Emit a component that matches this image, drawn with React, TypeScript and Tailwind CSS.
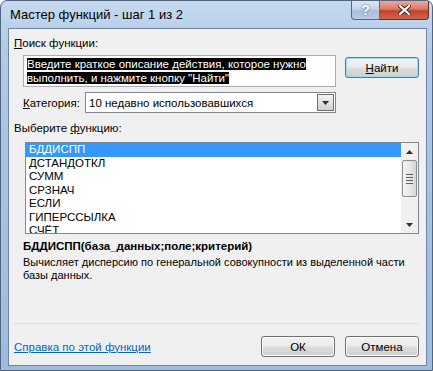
const items = ['БДДИСПП', 'ДСТАНДОТКЛ', 'СУММ', 'СРЗНАЧ', 'ЕСЛИ', 'ГИПЕРССЫЛКА', 'СЧЁТ']

function Button({ children, focused }: { children: React.ReactNode; focused?: boolean }) {
  return (
    <div
      className={
        'flex h-[21px] w-[74px] items-center justify-center rounded-[3px] border bg-[linear-gradient(180deg,#f2f2f2_0%,#ebebeb_48%,#dddddd_52%,#cfcfcf_100%)] text-black ' +
        (focused
          ? 'border-[#3c7fb1] shadow-[inset_0_0_0_1px_#9fd9f6]'
          : 'border-[#707070] shadow-[inset_0_0_0_1px_#fbfbfb]')
      }
    >
      {children}
    </div>
  )
}

function Arrow({ up }: { up?: boolean }) {
  return (
    <svg width="7" height="4" viewBox="0 0 7 4">
      {up ? <path d="M3.5 0 L7 4 L0 4 Z" fill="#303030" /> : <path d="M0 0 L7 0 L3.5 4 Z" fill="#303030" />}
    </svg>
  )
}

export default function App() {
  return (
    <div className="h-[371px] w-[433px] overflow-hidden bg-white font-['Liberation_Sans',sans-serif]">
      <div className="flex h-[371px] w-[433px] flex-col rounded-t-[7px] border border-[#52657e] bg-[linear-gradient(180deg,#c6d9ef_0%,#b3cbe8_12%,#a9c3e3_40%,#9fbbdf_100%)]">
        {/* title bar */}
        <div className="flex h-[27px] items-start justify-between">
          <div className="pl-[9px] pt-[6px] text-[13px] leading-[15px] text-black">Мастер функций - шаг 1 из 2</div>
          <div className="mr-[3px] flex">
            <div className="flex h-[19px] w-[29px] items-center justify-center rounded-bl-[4px] border border-t-0 border-[#4f6a8d] bg-[linear-gradient(180deg,#dbe6f4_0%,#c3d4ea_45%,#a9bfdd_55%,#b7cbe5_100%)] text-[14px] font-bold leading-none text-white [text-shadow:0_0_2px_#3a4f6c]">
              ?
            </div>
            <div className="flex h-[19px] w-[49px] items-center justify-center rounded-br-[4px] border border-l-0 border-t-0 border-[#6b2a20] bg-[linear-gradient(180deg,#e9a99a_0%,#d9796a_45%,#c2402a_55%,#d0684e_100%)]">
              <svg width="13" height="10" viewBox="0 0 13 10">
                <path d="M2 1 L11 9 M11 1 L2 9" stroke="#4a2018" strokeWidth="4" strokeLinecap="square" />
                <path d="M2 1 L11 9 M11 1 L2 9" stroke="#ffffff" strokeWidth="2.2" strokeLinecap="square" />
              </svg>
            </div>
          </div>
        </div>

        {/* client area */}
        <div className="mb-[4px] ml-[7px] mr-[5px] flex flex-1 flex-col border border-[#6e84a3] bg-[#f0f0f0] pl-[5px] pr-[7px] text-[11.5px] leading-[14px] text-black">
          <div className="mt-[7px]">
            <span className="underline">П</span>оиск функции:
          </div>
          <div className="mt-[5px] flex items-start">
            <div className="ml-[9px] h-[32px] w-[313px] whitespace-nowrap border border-[#abadb3] bg-white pl-[3px] pt-[1px] text-white">
              <span className="bg-black">Введите краткое описание действия, которое нужно </span>
              <br />
              <span className="bg-black">выполнить, и нажмите кнопку "Найти"</span>
            </div>
            <div className="ml-[9px] mt-[2px]">
              <Button focused>
                <span className="underline">Н</span>айти
              </Button>
            </div>
          </div>
          <div className="mt-[5px] flex items-center">
            <div className="ml-[9px] w-[62px] whitespace-nowrap">
              <span className="underline">К</span>атегория:
            </div>
            <div className="flex h-[21px] w-[251px] items-center border border-[#828790] bg-white">
              <div className="flex-1 whitespace-nowrap pl-[3px]">10 недавно использовавшихся</div>
              <div className="mr-[1px] flex h-[17px] w-[17px] items-center justify-center border border-[#707070] bg-[linear-gradient(180deg,#f2f2f2_0%,#e2e2e2_50%,#d0d0d0_100%)]">
                <Arrow />
              </div>
            </div>
          </div>
          <div className="mt-[8px]">
            Выберите <span className="underline">ф</span>ункцию:
          </div>
          <div className="ml-[11px] mt-[7px] flex h-[92px] w-[394px] border border-[#828790] bg-white">
            <div className="flex-1 overflow-hidden">
              {items.map((it, i) => (
                <div
                  key={it}
                  className={
                    'h-[13.5px] pl-[3px] leading-[13.5px] ' + (i === 0 ? 'bg-[#3399ff] text-white' : 'text-black')
                  }
                >
                  {it}
                </div>
              ))}
            </div>
            <div className="flex w-[17px] flex-col items-center bg-[#f0f0f0]">
              <div className="flex h-[17px] items-center justify-center">
                <Arrow up />
              </div>
              <div className="flex h-[37px] w-[15px] flex-col items-center justify-center gap-[2px] rounded-[2px] border border-[#8e8f8f] bg-[linear-gradient(90deg,#f3f3f3_0%,#e8e8e8_50%,#d6d6d6_100%)]">
                <div className="h-[1px] w-[7px] bg-[#606060]" />
                <div className="h-[1px] w-[7px] bg-[#606060]" />
                <div className="h-[1px] w-[7px] bg-[#606060]" />
                <div className="h-[1px] w-[7px] bg-[#606060]" />
              </div>
              <div className="flex-1" />
              <div className="flex h-[17px] items-center justify-center">
                <Arrow />
              </div>
            </div>
          </div>
          <div className="ml-[9px] mt-[5px] font-bold">БДДИСПП(база_данных;поле;критерий)</div>
          <div className="ml-[9px] mt-[3px] whitespace-nowrap text-[11px] leading-[13px]">
            Вычисляет дисперсию по генеральной совокупности из выделенной части
            <br />
            базы данных.
          </div>
          <div className="flex-1" />
          <div className="h-[1px] bg-[#d5dfe5]" />
          <div className="mb-[8px] mt-[12px] flex items-center">
            <div className="flex-1 text-[#0066cc] underline">Справка по этой функции</div>
            <Button>ОК</Button>
            <div className="ml-[10px]">
              <Button>Отмена</Button>
            </div>
          </div>
        </div>
      </div>
    </div>
  )
}
